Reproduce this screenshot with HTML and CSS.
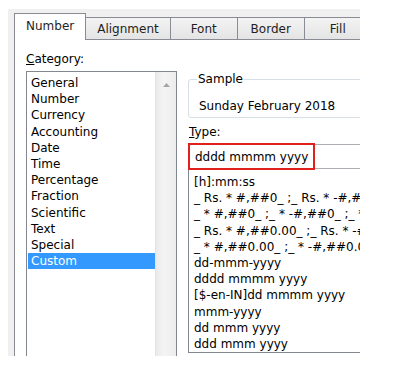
FILE: index.html
```html
<!DOCTYPE html>
<html lang="en">

<head>
  <meta charset="UTF-8">
  <meta name="viewport" content="width=device-width, initial-scale=1.0">
  <title>Format Cells</title>
  <link rel="stylesheet" href="styles.css">
</head>

<body>
  <div class="dialog">
    <div class="tabs">
      <div class="tab active">Number</div>
      <div class="tab">Alignment</div>
      <div class="tab">Font</div>
      <div class="tab">Border</div>
      <div class="tab">Fill</div>
    </div>
    <div class="panel">
      <div class="col-left">
        <p class="label"><u>C</u>ategory:</p>
        <div class="listbox">
          <ul class="items">
            <li>General</li>
            <li>Number</li>
            <li>Currency</li>
            <li>Accounting</li>
            <li>Date</li>
            <li>Time</li>
            <li>Percentage</li>
            <li>Fraction</li>
            <li>Scientific</li>
            <li>Text</li>
            <li>Special</li>
            <li class="selected">Custom</li>
          </ul>
          <div class="scrollbar">
            <svg width="7" height="4" viewBox="0 0 7 4"><path d="M0 4 L3.5 0 L7 4 Z" fill="#a6a6a6"/></svg>
          </div>
        </div>
      </div>
      <div class="col-right">
        <fieldset class="sample">
          <legend>Sample</legend>
          <p class="sample-text">Sunday February 2018</p>
        </fieldset>
        <p class="label type-label"><u>T</u>ype:</p>
        <div class="type-box">
          <span class="type-mark">dddd mmmm yyyy</span>
        </div>
        <ul class="formats">
          <li>[h]:mm:ss</li>
          <li>_ Rs. * #,##0_ ;_ Rs. * -#,##0_</li>
          <li>_ * #,##0_ ;_ * -#,##0_ ;_ *</li>
          <li>_ Rs. * #,##0.00_ ;_ Rs. * -#</li>
          <li>_ * #,##0.00_ ;_ * -#,##0.00</li>
          <li>dd-mmm-yyyy</li>
          <li>dddd mmmm yyyy</li>
          <li>[$-en-IN]dd mmmm yyyy</li>
          <li>mmm-yyyy</li>
          <li>dd mmm yyyy</li>
          <li>ddd mmm yyyy</li>
        </ul>
      </div>
    </div>
  </div>
</body>

</html>
```
FILE: styles.css
```css
body {
  margin: 0;
  background: #fff;
  width: 395px;
  height: 381px;
  font-family: "DejaVu Sans", Tahoma, sans-serif;
  font-size: 12px;
  color: #000;
}

.dialog {
  margin: 9px 0 0 8px;
  width: 352px;
  height: 347px;
  box-sizing: border-box;
  padding: 4px 0 0 6px;
  background: #f0f0f0;
  overflow: hidden;
}

.tabs {
  display: flex;
  align-items: flex-end;
  height: 26px;
}

.tab {
  flex-shrink: 0;
  min-width: 68px;
  height: 22px;
  box-sizing: border-box;
  padding: 0 11px;
  display: flex;
  align-items: center;
  justify-content: center;
  border: 1px solid #898c95;
  border-bottom: none;
  margin-left: -1px;
  background: linear-gradient(#f3f3f3, #e4e4e4);
  color: #1e1e1e;
}

.tab.active {
  position: relative;
  z-index: 1;
  margin-left: 0;
  height: 27px;
  margin-bottom: -1px;
  padding-bottom: 3px;
  background: #fff;
}

.panel {
  width: 420px;
  height: 330px;
  box-sizing: border-box;
  border: 1px solid #898c95;
  background: #fff;
  display: flex;
  gap: 11px;
  padding-left: 11px;
}

.label {
  margin: 12px 0 4px;
  line-height: 15px;
}

.col-left {
  width: 151px;
  flex-shrink: 0;
}

.listbox {
  display: flex;
  height: 300px;
  border: 1px solid #828790;
}

.items {
  list-style: none;
  margin: 0;
  padding: 3px 0 0 1px;
  flex: 1;
}

.items li,
.formats li {
  line-height: 16.2px;
  height: 16.2px;
  white-space: nowrap;
}

.items li {
  padding-left: 3px;
}

.items .selected {
  background: #3399ff;
  color: #fff;
}

.scrollbar {
  width: 21px;
  border-left: 1px solid #e3e3e3;
  background: linear-gradient(90deg, #eaeaea, #f4f4f4 40%, #ececec);
  display: flex;
  justify-content: center;
  padding-top: 11px;
  box-sizing: border-box;
}

.col-right {
  width: 230px;
  flex-shrink: 0;
}

.sample {
  margin: 32px 0 0;
  padding: 0 0 0 9px;
  height: 46px;
  box-sizing: border-box;
  border: 1px solid #d5dfe5;
  border-radius: 3px;
}

.sample legend {
  padding: 0 1px;
  margin-left: -1px;
  line-height: 15px;
}

.sample-text {
  margin: 12px 0 0 1px;
  line-height: 15px;
}

.type-label {
  margin: 7px 0 4px 1px;
}

.type-box {
  height: 25px;
  box-sizing: border-box;
  border: 1px solid #abadb3;
  display: flex;
}

.type-mark {
  display: flex;
  align-items: center;
  width: 127px;
  box-sizing: border-box;
  margin: -2px 0 -2px -1px;
  padding-left: 5px;
  border: 2px solid #e0201b;
}

.formats {
  list-style: none;
  margin: 0;
  height: 184px;
  box-sizing: border-box;
  padding: 5px 0 0 5px;
  border: 1px solid #828790;
  border-top: none;
  overflow: hidden;
}
```
